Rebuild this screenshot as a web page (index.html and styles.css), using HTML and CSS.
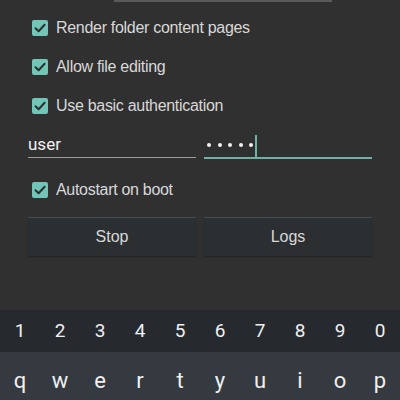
FILE: index.html
```html
<!DOCTYPE html>
<html lang="en">
<head>
  <meta charset="UTF-8" />
  <title>Server settings</title>
  <link rel="stylesheet" href="styles.css">
</head>
<body>

  <!-- Sisa field di atas -->
  <div class="top-edge"></div>

  <div class="settings">
    <label class="check-row">
      <span class="box"><svg viewBox="0 0 16 16"><path d="M3.5 8.2 L6.6 11.2 L12.6 4.8" /></svg></span>
      <span class="label">Render folder content pages</span>
    </label>
    <label class="check-row">
      <span class="box"><svg viewBox="0 0 16 16"><path d="M3.5 8.2 L6.6 11.2 L12.6 4.8" /></svg></span>
      <span class="label">Allow file editing</span>
    </label>
    <label class="check-row">
      <span class="box"><svg viewBox="0 0 16 16"><path d="M3.5 8.2 L6.6 11.2 L12.6 4.8" /></svg></span>
      <span class="label">Use basic authentication</span>
    </label>

    <div class="auth">
      <div class="field">
        <span class="value">user</span>
      </div>
      <div class="field focused">
        <span class="dots"><i></i><i></i><i></i><i></i><i></i></span>
        <span class="caret"></span>
      </div>
    </div>

    <label class="check-row auto">
      <span class="box"><svg viewBox="0 0 16 16"><path d="M3.5 8.2 L6.6 11.2 L12.6 4.8" /></svg></span>
      <span class="label">Autostart on boot</span>
    </label>

    <div class="buttons">
      <button class="btn">Stop</button>
      <button class="btn">Logs</button>
    </div>
  </div>

  <!-- Keyboard -->
  <div class="keyboard">
    <div class="row numbers">
      <span>1</span><span>2</span><span>3</span><span>4</span><span>5</span>
      <span>6</span><span>7</span><span>8</span><span>9</span><span>0</span>
    </div>
    <div class="row letters">
      <span>q</span><span>w</span><span>e</span><span>r</span><span>t</span>
      <span>y</span><span>u</span><span>i</span><span>o</span><span>p</span>
    </div>
  </div>

</body>
</html>
```

FILE: styles.css
```css
body {
  margin: 0;
  width: 400px;
  height: 400px;
  overflow: hidden;
  background: #303030;
  font-family: "Liberation Sans", Arial, sans-serif;
  color: #e4e4e4;
}
.top-edge {
  margin-left: 114px;
  width: 218px;
  height: 2px;
  background: #5a5a5a;
}
.settings {
  box-sizing: border-box;
  padding: 6px 28px 0;
  height: 308px;
}
.check-row {
  display: flex;
  align-items: center;
  height: 39px;
  padding-left: 4px;
}
.box {
  width: 16px;
  height: 16px;
  border-radius: 2px;
  background: #72c6b7;
  margin-right: 8px;
  flex: none;
}
.box svg {
  display: block;
  width: 16px;
  height: 16px;
}
.box path {
  fill: none;
  stroke: #2c2f30;
  stroke-width: 2;
  stroke-linecap: round;
  stroke-linejoin: round;
}
.label {
  font-size: 16px;
  color: #d8d8d8;
  letter-spacing: -0.3px;
}
.auth {
  display: flex;
  gap: 8px;
  margin-top: 5px;
}
.field {
  flex: 1;
  height: 27px;
  border-bottom: 1px solid #9c9c9c;
  display: flex;
  align-items: center;
}
.field .value {
  font-family: Roboto, sans-serif;
  font-size: 17px;
  color: #f0f0f0;
  margin-top: 1px;
}
.field.focused {
  border-bottom: 2px solid #6cb3a5;
}
.dots {
  display: flex;
  gap: 6.5px;
  margin-left: 3px;
  margin-top: 2px;
}
.dots i {
  width: 4px;
  height: 4px;
  border-radius: 50%;
  background: #f4f4f4;
}
.caret {
  width: 2px;
  height: 22px;
  background: #6cb3a5;
  margin-left: 2px;
  margin-top: 4px;
}
.check-row.auto {
  margin-top: 15px;
  height: 32px;
}
.buttons {
  display: flex;
  gap: 8px;
  margin-top: 11px;
}
.btn {
  flex: 1;
  height: 39px;
  border: none;
  border-top: 1px solid #4a4d4f;
  background: #2c2f32;
  color: #d8d8d8;
  font-family: "Liberation Sans", Arial, sans-serif;
  font-size: 16px;
  box-shadow: 0 1px 1px rgba(0,0,0,0.25);
}
.keyboard {
  font-family: Roboto, sans-serif;
  color: #eef0f2;
}
.row {
  display: flex;
}
.row span {
  flex: 1;
  text-align: center;
}
.numbers {
  background: #262a2e;
  height: 42px;
  line-height: 42px;
  font-size: 19px;
}
.letters {
  background: #353a40;
  height: 48px;
  line-height: 58px;
  font-size: 22px;
}
```
